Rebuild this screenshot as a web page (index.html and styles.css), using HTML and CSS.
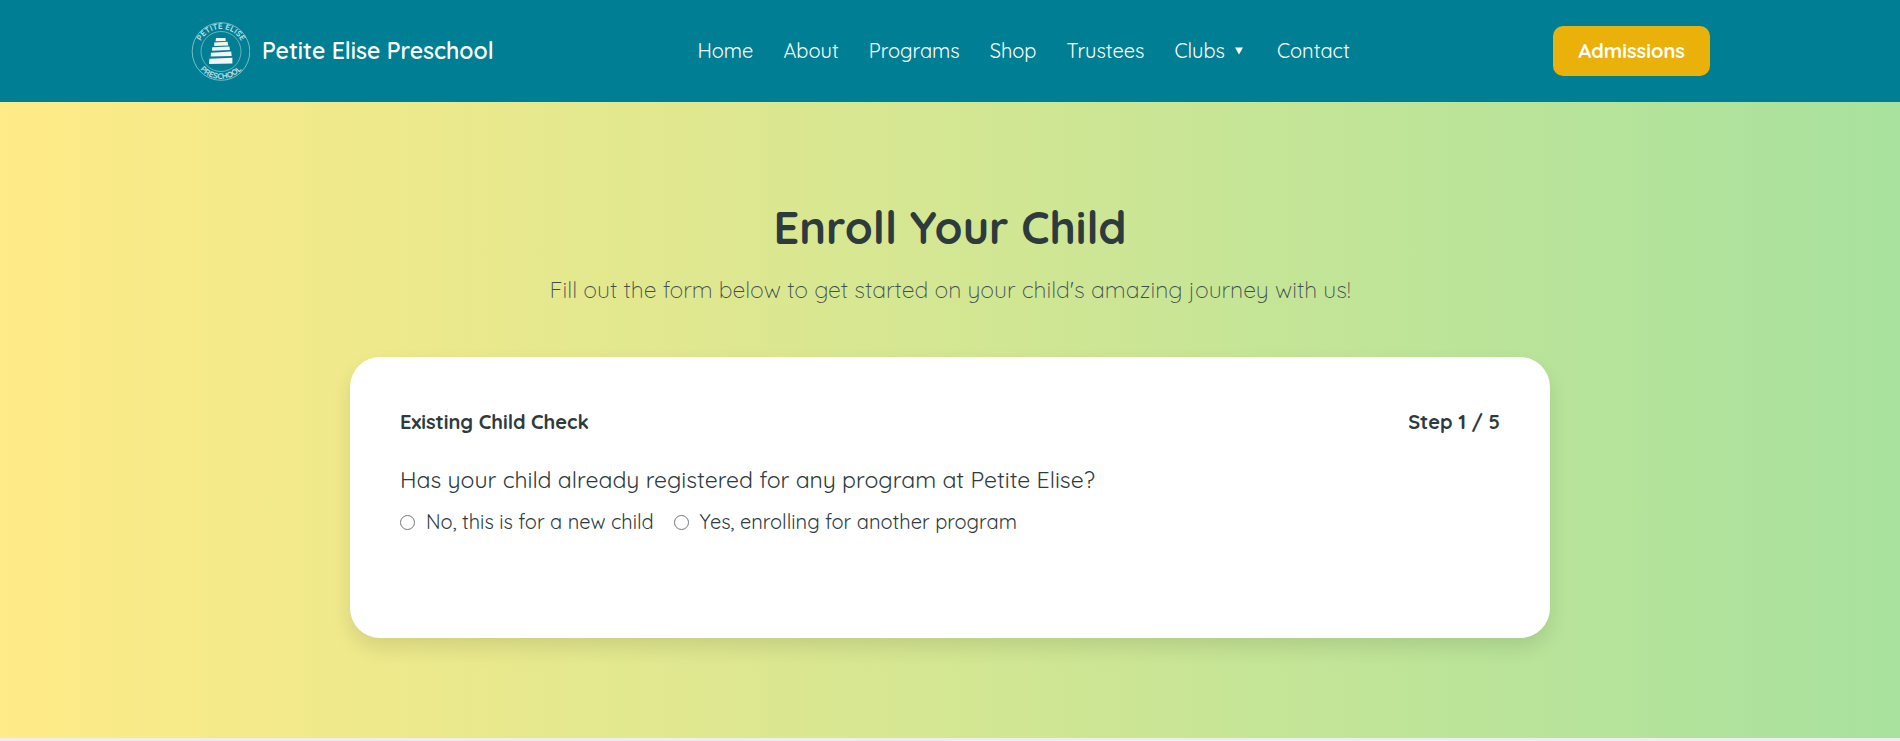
FILE: index.html
```html
<!DOCTYPE html>
<html lang="en">
<head>
<meta charset="utf-8">
<meta name="viewport" content="width=device-width, initial-scale=1">
<title>Petite Elise Preschool</title>
<link rel="stylesheet" href="styles.css">
</head>
<body>
<header class="header">
  <a class="brand" href="#home">
    <svg class="brand-logo" viewBox="0 0 60 60" aria-hidden="true">
      <defs>
        <path id="arc-top" d="M8.500 30.500a22.500 22.500 0 0 1 45 0"/>
        <path id="arc-bottom" d="M3.500 30.500a27.500 27.500 0 0 0 55 0"/>
      </defs>
      <g fill="none" stroke="#fff">
        <circle cx="31" cy="30.500" r="28.800" stroke-opacity=".6" stroke-width=".8"/>
        <circle cx="31" cy="30.500" r="20" stroke-opacity=".5" stroke-width=".8"/>
      </g>
      <g class="brand-ring">
        <text text-anchor="middle"><textPath href="#arc-top" startOffset="50%">PETITE ELISE</textPath></text>
        <text text-anchor="middle"><textPath href="#arc-bottom" startOffset="50%">PRESCHOOL</textPath></text>
      </g>
      <g fill="#f4f4f4">
        <path d="M26 17h9.600v3l-10 .2z"/>
        <path d="M24.200 21.600l13.400-.8.600 3.600-14 .6z"/>
        <path d="M22.200 26.200l17.200-.6.600 3.400-18 .8z"/>
        <path d="M21 31.800l20.200-1.200.500 4.400-21 .6z"/>
        <path d="M19.400 37.800l23-1v5.700l-23.400.5z"/>
      </g>
    </svg>
    <span class="brand-name">Petite Elise Preschool</span>
  </a>
  <nav class="nav">
    <a href="#home">Home</a>
    <a href="#about">About</a>
    <a href="#programs">Programs</a>
    <a href="#shop">Shop</a>
    <a href="#trustees">Trustees</a>
    <a class="nav-drop" href="#clubs">Clubs
      <svg class="nav-caret" viewBox="0 0 8 8" aria-hidden="true"><path d="M0 0.5h8l-4 7z" fill="currentColor"/></svg>
    </a>
    <a href="#contact">Contact</a>
  </nav>
  <button class="admissions" type="button">Admissions</button>
</header>
<main class="enroll">
  <h1 class="title">Enroll Your Child</h1>
  <p class="subtitle">Fill out the form below to get started on your child's amazing journey with us!</p>
  <form class="card">
    <div class="card-head">
      <h2>Existing Child Check</h2>
      <span>Step 1 / 5</span>
    </div>
    <fieldset class="question">
      <legend>Has your child already registered for any program at Petite Elise?</legend>
      <div class="options">
        <label><input type="radio" name="existing" value="no">No, this is for a new child</label>
        <label><input type="radio" name="existing" value="yes">Yes, enrolling for another program</label>
      </div>
    </fieldset>
  </form>
</main>
</body>
</html>
```
FILE: styles.css
```css
* {
  box-sizing: border-box;
  margin: 0;
  padding: 0;
}

body {
  background: #eeeef1;
  color: #2d3b3e;
  font-family: Quicksand, Lato, sans-serif;
  font-size: 20px;
  line-height: 30px;
}

a {
  color: inherit;
  text-decoration: none;
}

.header {
  display: flex;
  align-items: center;
  justify-content: space-between;
  padding: 21px 10%;
  background: #007f94;
  color: #fff;
}

.brand {
  display: flex;
  align-items: center;
  gap: 12px;
}

.brand-logo {
  width: 60px;
  height: 60px;
}

.brand-ring {
  fill: #fff;
  fill-opacity: .75;
  font-size: 8px;
  font-weight: 700;
}

.brand-name {
  font-size: 23px;
  font-weight: 650;
  line-height: 30px;
}

.nav {
  display: flex;
  gap: 30px;
}

.nav-drop {
  display: flex;
  align-items: center;
  gap: 10px;
}

.nav-caret {
  width: 8px;
  height: 8px;
  margin-right: 4px;
}

.admissions {
  padding: 10px 25px;
  border: 0;
  border-radius: 10px;
  background: #e9b10a;
  color: #fff;
  font: inherit;
  font-weight: 700;
}

.enroll {
  padding: 100px 20px;
  background: linear-gradient(to right, #ffeb87, #a8e29e);
}

.title {
  margin-bottom: 21px;
  font-size: 45px;
  line-height: 50px;
  text-align: center;
}

.subtitle {
  margin-bottom: 50px;
  color: #3f4e53;
  font-size: 23px;
  font-weight: 300;
  line-height: 34px;
  text-align: center;
}

.card {
  max-width: 1200px;
  margin: 0 auto;
  padding: 50px 50px 101px;
  border-radius: 30px;
  background: #fff;
  box-shadow: 0 10px 20px rgba(0, 0, 0, .1);
}

.card-head {
  display: flex;
  justify-content: space-between;
  margin-bottom: 28px;
  font-weight: 700;
}

.card-head h2 {
  font-size: inherit;
}

.question {
  border: 0;
}

.question legend {
  margin-bottom: 12px;
  font-size: 23px;
  line-height: 30px;
}

.options {
  display: flex;
  flex-wrap: wrap;
  gap: 20px;
}

.options label {
  display: flex;
  align-items: center;
  gap: 11px;
}

.options input {
  width: 15px;
  height: 15px;
}
```
